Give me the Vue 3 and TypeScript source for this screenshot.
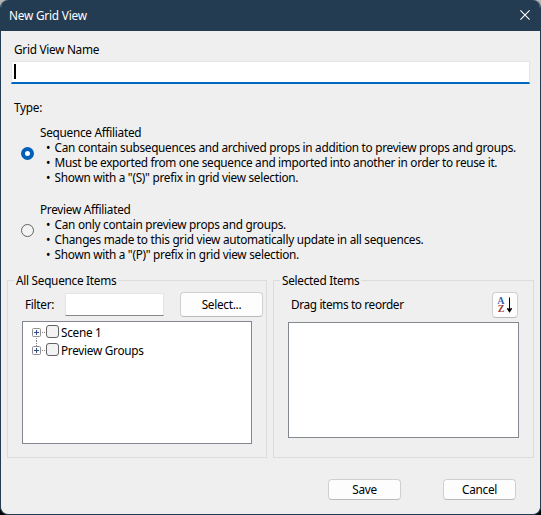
<script setup lang="ts">
import { ref } from 'vue'

interface ViewType {
  id: string
  title: string
  notes: string[]
}

const types: ViewType[] = [
  {
    id: 'sequence',
    title: 'Sequence Affiliated',
    notes: [
      'Can contain subsequences and archived props in addition to preview props and groups.',
      'Must be exported from one sequence and imported into another in order to reuse it.',
      'Shown with a "(S)" prefix in grid view selection.',
    ],
  },
  {
    id: 'preview',
    title: 'Preview Affiliated',
    notes: [
      'Can only contain preview props and groups.',
      'Changes made to this grid view automatically update in all sequences.',
      'Shown with a "(P)" prefix in grid view selection.',
    ],
  },
]
const items = ['Scene 1', 'Preview Groups']
const selected = ref('sequence')
</script>

<template>
  <div class="backdrop">
    <div class="window">
      <header class="titlebar">
        <span class="caption">New Grid View</span>
        <svg class="close" width="10" height="10" viewBox="0 0 10 10"><path d="M.4.4l9.2 9.2M9.6.4L.4 9.6" /></svg>
      </header>
      <main class="content">
        <div class="label name-label"><span>Grid View Name</span></div>
        <div class="name-input"><i class="caret"></i></div>
        <div class="label type-label"><span>Type:</span></div>

        <div v-for="t in types" :key="t.id" class="option" @click="selected = t.id">
          <span class="radio" :class="{ on: selected === t.id }"></span>
          <div class="option-text">
            <div class="line"><span>{{ t.title }}</span></div>
            <div v-for="(n, i) in t.notes" :key="i" class="line note" :class="`${t.id}-${i}`">
              <span class="bullet">•</span><span>{{ n }}</span>
            </div>
          </div>
        </div>

        <div class="groups">
          <section class="group source">
            <h2 class="legend">All Sequence Items</h2>
            <div class="tools">
              <span class="filter-label">Filter:</span>
              <div class="filter-input"></div>
              <button class="btn select-btn">Select...</button>
            </div>
            <div class="tree">
              <div v-for="(item, i) in items" :key="item" class="node">
                <svg class="expander" width="14" height="18" viewBox="0 0 14 18">
                  <path v-if="i > 0" class="dots" d="M4.5 0v5" />
                  <path v-if="i < items.length - 1" class="dots" d="M4.5 15v3" />
                  <path class="dots" d="M10 9.5h4" />
                  <rect x=".5" y="5.5" width="8" height="8" rx="1" />
                  <path class="plus" d="M2 9.5h5M4.5 7v5" />
                </svg>
                <span class="check"></span>
                <span class="node-text">{{ item }}</span>
              </div>
            </div>
          </section>

          <section class="group target">
            <h2 class="legend">Selected Items</h2>
            <div class="tools">
              <span class="drag-label">Drag items to reorder</span>
              <button class="btn sort-btn" aria-label="Sort">
                <svg width="18" height="18" viewBox="0 0 18 18">
                  <text class="a" x="4.8" y="8">A</text>
                  <text class="z" x="5.2" y="16.200">Z</text>
                  <path class="shaft" d="M13.5 1.500v12" />
                  <path d="M11 12l2.500.8 2.500-.8v1L13.5 16.800 11 13z" />
                </svg>
              </button>
            </div>
            <div class="list"></div>
          </section>
        </div>

        <footer class="actions">
          <button class="btn">Save</button>
          <button class="btn">Cancel</button>
        </footer>
      </main>
    </div>
  </div>
</template>

<style>
body {
  margin: 0;
}
</style>

<style scoped>
* {
  box-sizing: border-box;
}
.backdrop {
  width: 541px;
  height: 515px;
  overflow: hidden;
  background: linear-gradient(#b5b5b5 50%, #000 50%);
  font: 11.8px/15px "Noto Sans", "Open Sans", sans-serif;
  letter-spacing: -0.28px;
  color: #000;
}
.window {
  display: flex;
  flex-direction: column;
  height: 515px;
  border: 1px solid #243c52;
  border-top: 0;
  border-radius: 8px;
  overflow: hidden;
  background: #efefef;
}
.titlebar {
  display: flex;
  flex: none;
  align-items: center;
  justify-content: space-between;
  height: 31px;
  padding: 0 10px 1px 8px;
  background: #243c52;
  color: #fff;
  letter-spacing: -0.2px;
}
.close {
  fill: none;
  stroke: #fff;
  stroke-width: 1.1;
}
.content {
  flex: 1;
}
.label {
  padding-left: 13px;
}
.name-label {
  padding-top: 11px;
}
.name-input {
  display: flex;
  width: 519px;
  height: 23px;
  margin: 4px 0 0 10px;
  padding: 2px;
  background: #fff;
  border: 1px solid #e5e5e5;
  border-bottom: 2px solid #0067c0;
}
.caret {
  width: 2px;
  height: 15px;
  background: #000;
}
.type-label {
  margin-top: 16px;
}
.option {
  display: flex;
  height: 60px;
  margin: 10px 0 17px 20px;
}
.radio {
  flex: none;
  width: 13px;
  height: 13px;
  margin-top: 22px;
  border: 1px solid #626262;
  border-radius: 50%;
  background: #f3f3f3;
}
.radio.on {
  border: 4px solid #005fb8;
  background: #fff;
}
.option-text {
  margin-left: 6px;
  white-space: nowrap;
}
.note {
  display: flex;
  padding-left: 6px;
}
.sequence-1 {
  letter-spacing: -0.31px;
}
.bullet {
  flex: none;
  width: 8.6px;
}
.groups {
  display: flex;
  gap: 6px;
  margin: 18px 0 0 6px;
}
.group {
  width: 261px;
  height: 178px;
  border: 1px solid #dcdcdc;
}
.source {
  width: 260px;
}
.legend {
  width: max-content;
  margin: -8px 0 0 6px;
  padding: 0 2px;
  background: #efefef;
  font: inherit;
}
.tools {
  display: flex;
  align-items: center;
  height: 25px;
  margin-top: 4px;
}
.filter-label {
  width: 39px;
  margin-left: 17px;
}
.filter-input {
  width: 99px;
  height: 23px;
  margin-left: 1px;
  background: #fff;
  border: 1px solid #e5e5e5;
  border-bottom-color: #868686;
}
.btn {
  padding: 0;
  border: 1px solid #d0d0d0;
  border-bottom-color: #bababa;
  border-radius: 4px;
  background: #fdfdfd;
  color: #000;
  font: inherit;
  letter-spacing: inherit;
}
.select-btn {
  width: 83px;
  height: 25px;
  margin-left: 16px;
}
.tree {
  width: 230px;
  height: 123px;
  margin: 4px 0 0 14px;
  padding: 1px 0 0 9px;
  border: 1px solid #828790;
  background: #fff;
}
.node {
  display: flex;
  align-items: center;
  height: 18px;
}
.expander {
  fill: #fafafa;
  stroke: #919191;
}
.expander .dots {
  stroke: #808080;
  stroke-dasharray: 1 1;
}
.expander .plus {
  stroke: #314d8c;
}
.check {
  width: 13px;
  height: 13px;
  margin-bottom: 1px;
  border: 1px solid #626262;
  border-radius: 3px;
  background: #f3f3f3;
}
.node-text {
  margin-left: 2px;
}
.drag-label {
  margin-left: 17px;
  letter-spacing: -0.36px;
}
.sort-btn {
  display: flex;
  align-items: center;
  justify-content: center;
  width: 26px;
  height: 26px;
  margin: 0 15px 0 auto;
}
.sort-btn svg {
  overflow: visible;
}
.sort-btn text {
  font: bold 10px "Liberation Serif", serif;
  letter-spacing: 0;
  text-anchor: middle;
}
.sort-btn .a {
  fill: #3c5fae;
}
.sort-btn .z {
  fill: #9a3c3c;
}
.shaft {
  stroke: #000;
}
.list {
  width: 231px;
  height: 116px;
  margin: 5px 0 0 14px;
  border: 1px solid #828790;
  background: #fff;
}
.actions {
  display: flex;
  gap: 42px;
  margin: 21px 0 0 327px;
}
.actions .btn {
  width: 73px;
  height: 21px;
}
</style>
